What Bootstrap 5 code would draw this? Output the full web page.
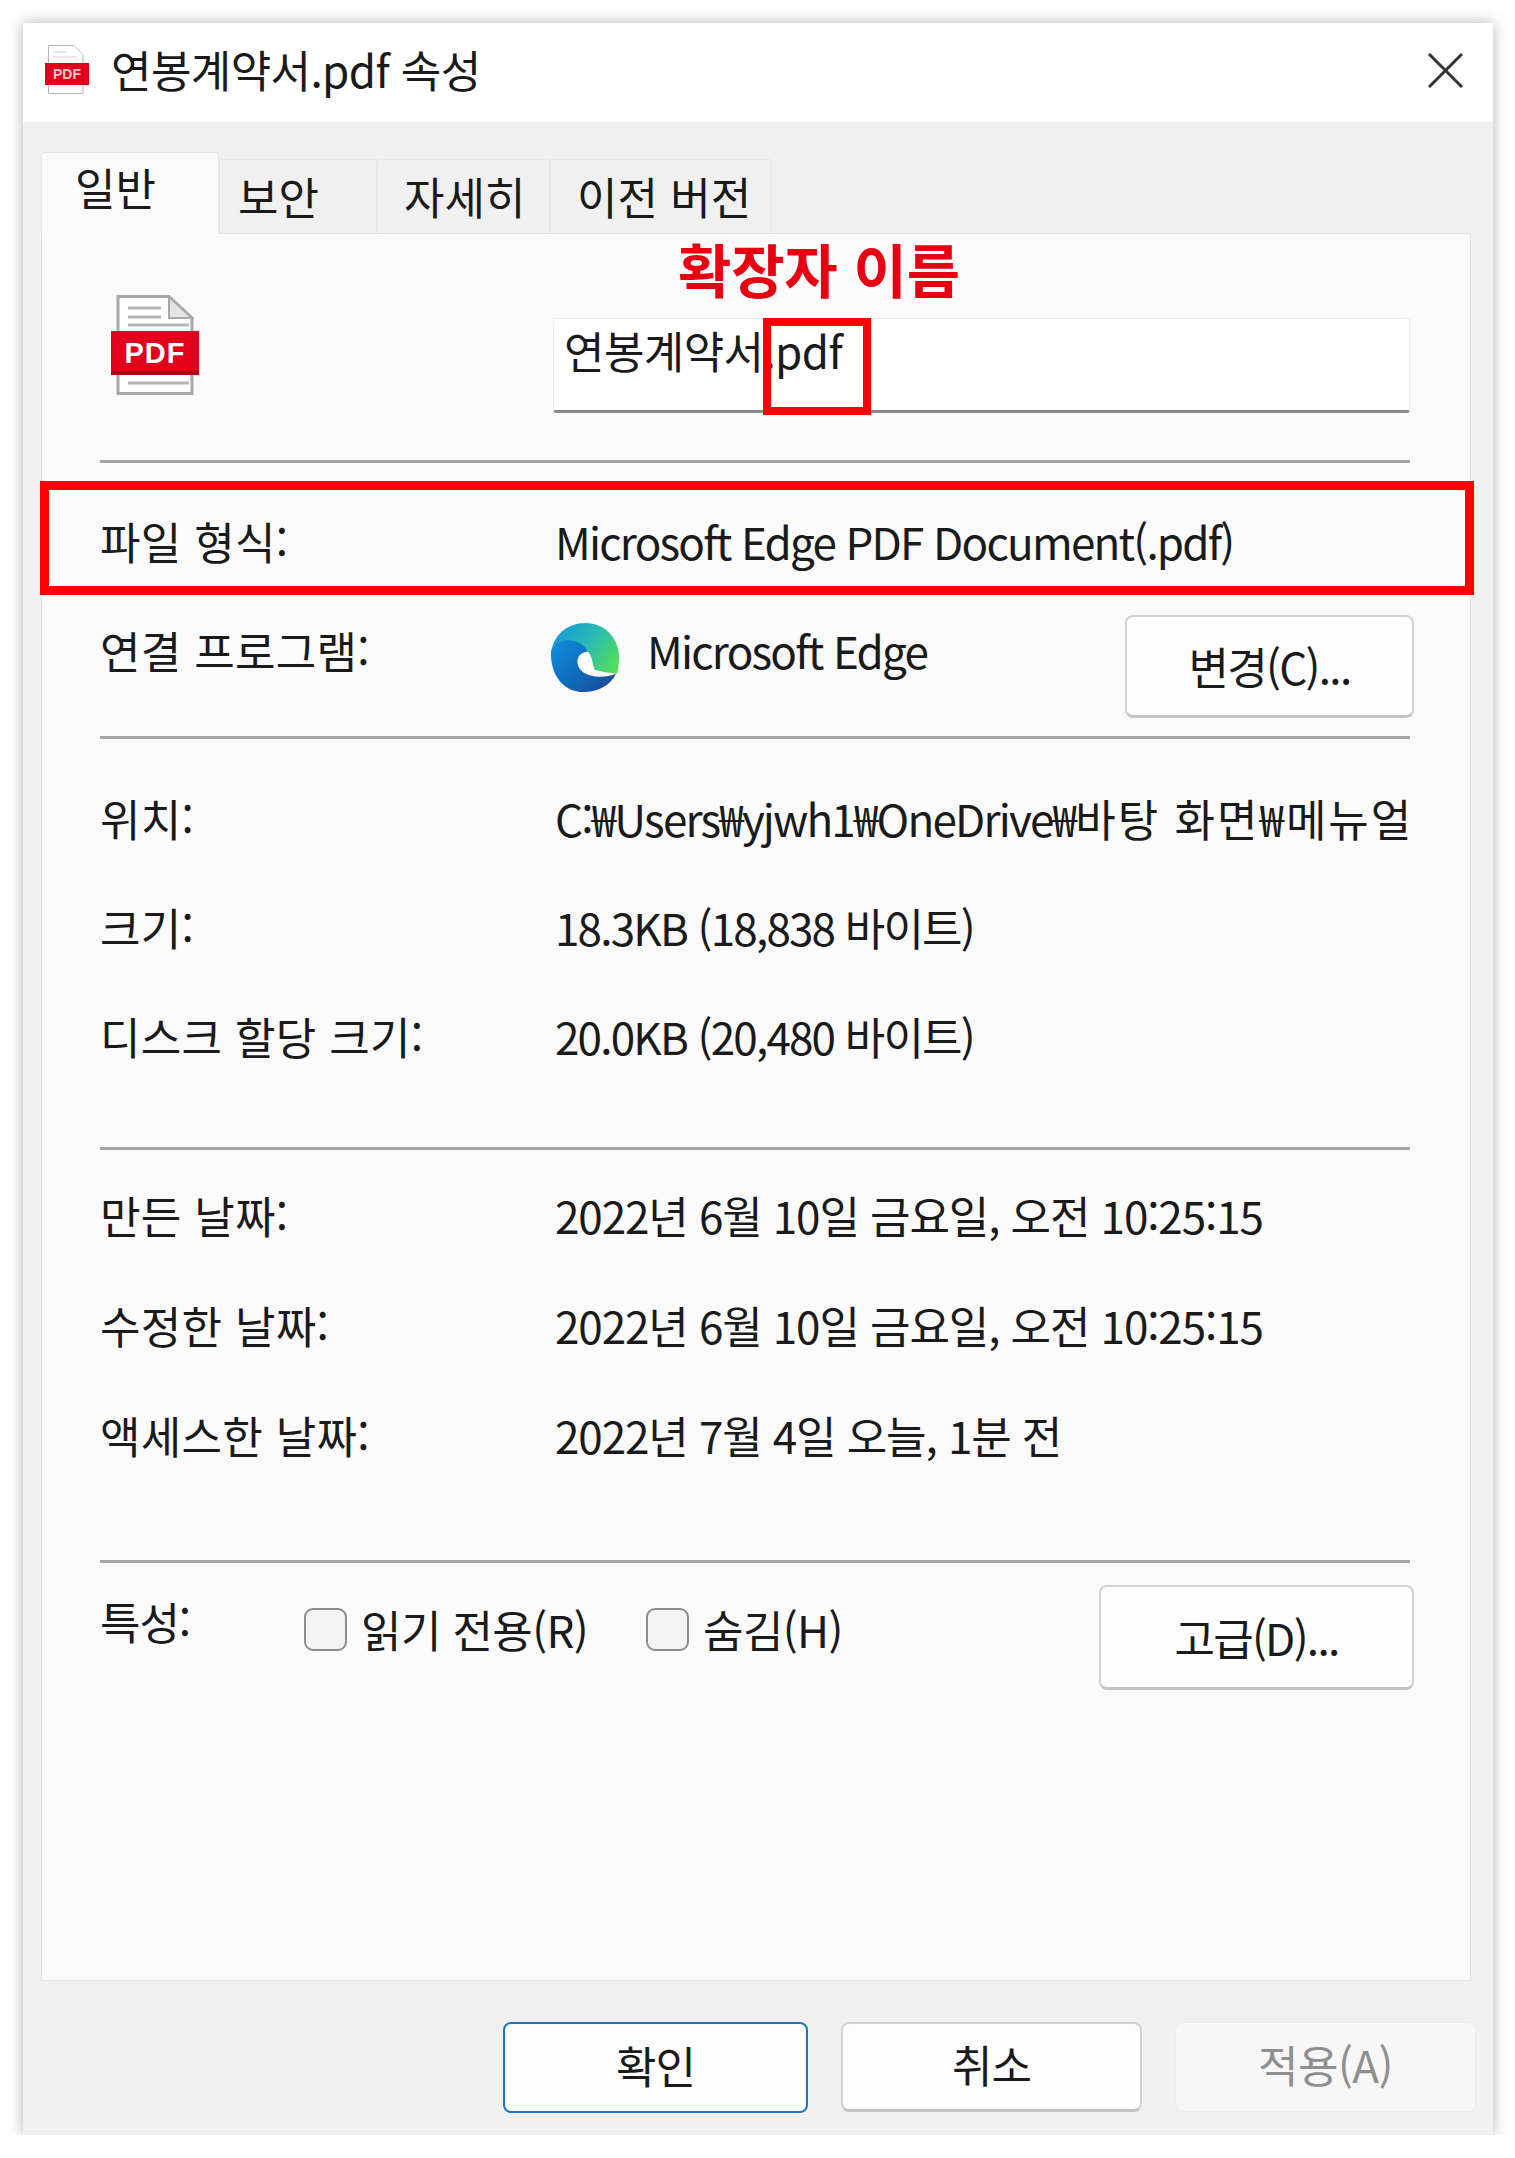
<!DOCTYPE html>
<html lang="ko">
<head>
  <meta charset="UTF-8">
  <meta name="viewport" content="width=device-width, initial-scale=1.0">
  <title>연봉계약서.pdf 속성</title>
  <link href="https://cdn.jsdelivr.net/npm/bootstrap@5.3.0/dist/css/bootstrap.min.css" rel="stylesheet">
  <style>
    body {
      background: #fff;
      color: #1a1a1a;
      font-family: "Noto Sans CJK KR", "Liberation Sans", sans-serif;
      font-size: 44px;
      letter-spacing: -1.1px;
      line-height: 60px;
      padding: 23px 0 0 23px;
    }
    .dlg {
      width: 1470px;
      height: 2112px;
      background: #f0f0f0;
      box-shadow: 0 0 14px rgba(0, 0, 0, .3);
      position: relative;
      overflow: hidden;
    }
    .dlg-title {
      height: 99px;
      background: #fff;
      padding: 22px 30px 0 22px;
    }
    .dlg-title svg.title-ico { margin-right: 22px; }
    .dlg-title .title-text { margin-top: -6px; letter-spacing: -.6px; }
    .close-x { margin-top: 8px; }

    /* 탭 */
    .dlg-tabs { padding: 30px 0 0 18px; height: 111px; border: 0; flex-wrap: nowrap; align-items: flex-end; letter-spacing: 0; }
    .dlg-tabs .nav-link {
      height: 74px;
      padding-top: 6px;
      padding-bottom: 0;
      padding-right: 0;
      text-align: left;
      color: #1a1a1a;
      background: #f0f0f0;
      border: 1px solid #e6e6e6;
      border-bottom: 0;
      border-radius: 3px 3px 0 0;
      margin: 0;
    }
    .dlg-tabs .nav-link.active {
      height: 82px;
      padding-top: 4px;
      background: #fafafa;
      color: #1a1a1a;
      margin-bottom: -1px;
      position: relative;
      z-index: 2;
      border-color: #e6e6e6;
    }
    .tab-a { width: 178px; padding-left: 33px; }
    .tab-b { width: 158px; padding-left: 18px; }
    .tab-c { width: 173px; padding-left: 26px; }
    .tab-d { width: 222px; padding-left: 26px; }

    .dlg-panel {
      margin-left: 18px;
      width: 1430px;
      height: 1748px;
      background: #fafafa;
      border: 1px solid #e3e3e3;
      padding: 0 60px 0 58px;
      position: relative;
    }
    .head-row { height: 226px; padding-top: 84px; }
    .file-ico { margin: -23px 0 0 11px; }
    .name-box {
      width: 857px;
      height: 95px;
      margin-left: 354px;
      padding: 0 10px 30px;
      font: inherit;
      letter-spacing: -.6px;
      color: inherit;
      background: #fff;
      border: 1px solid #ececec;
      border-bottom: 3px solid #8a8a8a;
      border-radius: 3px;
      box-shadow: none;
    }
    .sep { height: 3px; background: #a6a6a6; }
    .label-col { width: 455px; flex: none; letter-spacing: .3px; }
    .val-text { letter-spacing: -1.8px; }
    .val-wide { letter-spacing: 2px; }
    .prop-line { height: 110px; }
    .prop-line.tight { height: 109px; }
    .type-line { height: 140px; margin-top: 8px; }
    .app-line { height: 125px; padding-top: 4px; }
    .app-line .label-col { margin-top: 5px; }
    .app-name { margin: 5px 0 0 27px; flex: 1; }
    .edge-ico { margin: 8px 0 0 -6px; flex: none; }
    .dlg-btn {
      font: inherit;
      letter-spacing: inherit;
      color: #1a1a1a;
      background: #fdfdfd;
      border: 2px solid #d2d2d2;
      border-bottom: 3px solid #c4c4c4;
      border-radius: 8px;
      padding: 0;
      line-height: 1;
    }
    .dlg-btn:hover { color: #1a1a1a; background: #fdfdfd; border-color: #d2d2d2; border-bottom-color: #c4c4c4; }
    .side-btn { margin-right: -4px; flex: none; height: 103px; letter-spacing: -1.7px; }
    .btn-change { width: 289px; }
    .btn-adv { width: 315px; height: 105px; }
    .value-clip { width: 860px; white-space: nowrap; overflow: hidden; }
    .group-a { margin-top: 24px; height: 384px; }
    .group-b { margin-top: 10px; height: 400px; }

    .attr-line { height: 127px; padding-top: 22px; }
    .attr-label { width: 204px; flex: none; margin-top: 6px; }
    .attr-check { margin-top: 23px; letter-spacing: -.6px; }
    .attr-check .form-check-input {
      width: 43px;
      height: 43px;
      margin: 0 14px 0 0;
      background-color: #f3f3f3;
      border: 2px solid #8c8c8c;
      border-radius: 9px;
      flex: none;
    }
    .attr-check label { line-height: 43px; }
    .check-one { width: 342px; }
    .check-two { width: 453px; }

    .dlg-foot { padding: 41px 17px 0 0; gap: 33px; }
    .foot-btn { width: 301px; height: 90px; padding-bottom: 6px; }
    .foot-ok { width: 305px; border: 2px solid #1f74bd; border-radius: 8px; height: 91px; }
    .foot-off { background: #f7f7f7; color: #8f8f8f; border: 1px solid #ececec; letter-spacing: -.5px; }

    /* 빨간 표시 */
    .mark-ext {
      position: absolute;
      left: 740px;
      top: 295px;
      width: 108px;
      height: 97px;
      border: 8px solid #f00;
    }
    .mark-type {
      position: absolute;
      left: 17px;
      top: 458px;
      width: 1434px;
      height: 114px;
      border: 9px solid #f00;
    }
    .mark-text {
      position: absolute;
      left: 655px;
      top: 215px;
      color: #e60012;
      font-size: 58px;
      font-weight: 700;
      letter-spacing: -.2px;
      line-height: 60px;
    }
  </style>
</head>
<body>
<div class="dlg">
  <div class="dlg-title d-flex align-items-start">
    <svg class="title-ico" width="44" height="49" viewBox="0 0 44 49">
      <path d="M3.5 .5H29l9 9v39H3.5z" fill="#fff" stroke="#b5b5b5"/>
      <path d="M8 7h14M8 12h24" stroke="#d0d0d0"/>
      <rect y="18" width="44" height="22" fill="#e0001b"/>
      <text x="22" y="34" font-family="Liberation Sans" font-size="14" font-weight="700" letter-spacing="0" fill="#f6c6cb" text-anchor="middle">PDF</text>
    </svg>
    <span class="title-text flex-grow-1">연봉계약서.pdf 속성</span>
    <svg class="close-x" width="35" height="35" viewBox="0 0 35 35"><path d="M1 1l33 33M34 1L1 34" stroke="#333" stroke-width="3"/></svg>
  </div>

  <ul class="nav nav-tabs dlg-tabs">
    <li class="nav-item"><a class="nav-link active tab-a" href="#">일반</a></li>
    <li class="nav-item"><a class="nav-link tab-b" href="#">보안</a></li>
    <li class="nav-item"><a class="nav-link tab-c" href="#">자세히</a></li>
    <li class="nav-item"><a class="nav-link tab-d" href="#">이전 버전</a></li>
  </ul>

  <div class="dlg-panel">
    <div class="head-row d-flex align-items-start">
      <svg class="file-ico" width="88" height="100" viewBox="0 0 88 100">
        <path d="M7 1.5H58L81 23v75.5H7z" fill="#fff" stroke="#a8a8a8" stroke-width="3"/>
        <path d="M58 2v21h23z" fill="#e4e4e4" stroke="#a8a8a8" stroke-width="2"/>
        <path d="M17 13h33M17 22h33M17 30h61M17 88h61" stroke="#b4b4b4" stroke-width="3"/>
        <rect y="36" width="88" height="44" fill="#e0001b"/>
        <rect y="76" width="88" height="4" fill="#b80016"/>
        <text x="44" y="68" font-family="Liberation Sans" font-size="29" font-weight="700" fill="#fff" text-anchor="middle" letter-spacing="1">PDF</text>
      </svg>
      <input class="form-control name-box" type="text" value="연봉계약서.pdf">
    </div>
    <div class="sep"></div>

    <div class="type-line d-flex align-items-center">
      <div class="label-col">파일 형식:</div>
      <div class="val-text">Microsoft Edge PDF Document(.pdf)</div>
    </div>

    <div class="app-line d-flex align-items-start">
      <div class="label-col">연결 프로그램:</div>
      <svg class="edge-ico" width="71" height="70" viewBox="0 0 70 69">
        <defs>
          <linearGradient id="edgeTop" x1="0" y1=".2" x2="1" y2=".7">
            <stop offset="0" stop-color="#1596d8"/>
            <stop offset=".55" stop-color="#2dbdb0"/>
            <stop offset="1" stop-color="#4fdc5c"/>
          </linearGradient>
          <linearGradient id="edgeLow" x1="0" y1="0" x2="1" y2=".7">
            <stop offset="0" stop-color="#0f8ee0"/>
            <stop offset=".55" stop-color="#0f6cbc"/>
            <stop offset="1" stop-color="#1a4f9c"/>
          </linearGradient>
        </defs>
        <path d="M2 30C4 12 18 0 36 0c19 0 33 15 33 34 0 7-1 12-2 16-7-1-16-2-22-4 -2-4-2-14-7-18z" fill="url(#edgeTop)"/>
        <path d="M2 28C6 20 12 17 18 17c9 0 17 4 20 11-6 1-10 4-10 10 0 9 9 15 22 15 6 0 12-1 16-3-5 11-17 18-32 18C15 68 1 52 2 28z" fill="url(#edgeLow)"/>
      </svg>
      <div class="app-name val-text">Microsoft Edge</div>
      <button class="btn dlg-btn side-btn btn-change" type="button">변경(C)...</button>
    </div>
    <div class="sep"></div>

    <div class="group-a">
      <div class="prop-line tight d-flex align-items-center">
        <div class="label-col">위치:</div>
        <div class="value-clip"><span class="val-text">C:₩Users₩yjwh1₩OneDrive₩</span><span class="val-wide">바탕 화면₩메뉴얼</span></div>
      </div>
      <div class="prop-line tight d-flex align-items-center">
        <div class="label-col">크기:</div>
        <div class="val-text">18.3KB (18,838 바이트)</div>
      </div>
      <div class="prop-line tight d-flex align-items-center">
        <div class="label-col">디스크 할당 크기:</div>
        <div class="val-text">20.0KB (20,480 바이트)</div>
      </div>
    </div>
    <div class="sep"></div>

    <div class="group-b">
      <div class="prop-line d-flex align-items-center">
        <div class="label-col">만든 날짜:</div>
        <div>2022년 6월 10일 금요일, 오전 10:25:15</div>
      </div>
      <div class="prop-line d-flex align-items-center">
        <div class="label-col">수정한 날짜:</div>
        <div>2022년 6월 10일 금요일, 오전 10:25:15</div>
      </div>
      <div class="prop-line d-flex align-items-center">
        <div class="label-col">액세스한 날짜:</div>
        <div>2022년 7월 4일 오늘, 1분 전</div>
      </div>
    </div>
    <div class="sep"></div>

    <div class="attr-line d-flex align-items-start">
      <div class="attr-label">특성:</div>
      <div class="attr-check check-one d-flex align-items-center">
        <input class="form-check-input" type="checkbox" id="chkRead">
        <label for="chkRead">읽기 전용(R)</label>
      </div>
      <div class="attr-check check-two d-flex align-items-center">
        <input class="form-check-input" type="checkbox" id="chkHide">
        <label for="chkHide">숨김(H)</label>
      </div>
      <button class="btn dlg-btn side-btn btn-adv" type="button">고급(D)...</button>
    </div>
  </div>

  <div class="dlg-foot d-flex justify-content-end align-items-start">
    <button class="btn dlg-btn foot-btn foot-ok" type="button">확인</button>
    <button class="btn dlg-btn foot-btn" type="button">취소</button>
    <button class="btn dlg-btn foot-btn foot-off" type="button">적용(A)</button>
  </div>

  <div class="mark-text">확장자 이름</div>
  <div class="mark-ext"></div>
  <div class="mark-type"></div>
</div>
<script src="https://cdn.jsdelivr.net/npm/bootstrap@5.3.0/dist/js/bootstrap.bundle.min.js"></script>
</body>
</html>
